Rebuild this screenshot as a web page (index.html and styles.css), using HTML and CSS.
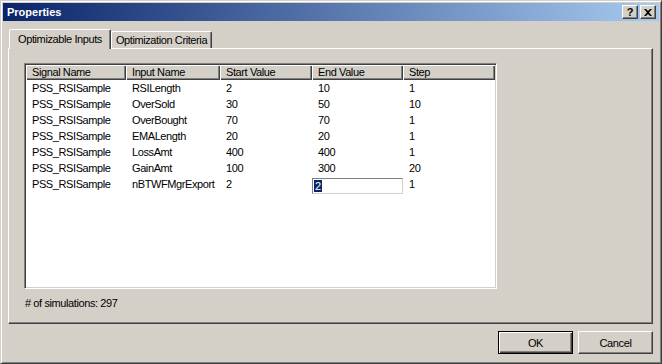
FILE: index.html
```html
<!DOCTYPE html>
<html lang="en">
<head>
    <meta charset="UTF-8">
    <title>Properties</title>
    <link rel="stylesheet" href="styles.css">
</head>
<body>

<div class="window">
    <div class="titlebar">
        <span class="title">Properties</span>
        <div class="caption-buttons">
            <span class="cap-btn">?</span>
            <span class="cap-btn">
                <svg width="8" height="7" viewBox="0 0 8 7"><path d="M0 0h2l2 2 2-2h2L5 3.5 8 7H6L4 5 2 7H0l3-3.5z" fill="#000"/></svg>
            </span>
        </div>
    </div>

    <div class="dialog-body">
        <div class="tabs">
            <div class="tab active">Optimizable Inputs</div>
            <div class="tab">Optimization Criteria</div>
        </div>

        <div class="panel">
            <div class="listview">
                <div class="lv-header">
                    <div class="hcell c1">Signal Name</div>
                    <div class="hcell c2">Input Name</div>
                    <div class="hcell c3">Start Value</div>
                    <div class="hcell c4">End Value</div>
                    <div class="hcell c5">Step</div>
                </div>
                <div class="lv-row">
                    <div class="cell c1">PSS_RSISample</div><div class="cell c2">RSILength</div><div class="cell c3">2</div><div class="cell c4">10</div><div class="cell c5">1</div>
                </div>
                <div class="lv-row">
                    <div class="cell c1">PSS_RSISample</div><div class="cell c2">OverSold</div><div class="cell c3">30</div><div class="cell c4">50</div><div class="cell c5">10</div>
                </div>
                <div class="lv-row">
                    <div class="cell c1">PSS_RSISample</div><div class="cell c2">OverBought</div><div class="cell c3">70</div><div class="cell c4">70</div><div class="cell c5">1</div>
                </div>
                <div class="lv-row">
                    <div class="cell c1">PSS_RSISample</div><div class="cell c2">EMALength</div><div class="cell c3">20</div><div class="cell c4">20</div><div class="cell c5">1</div>
                </div>
                <div class="lv-row">
                    <div class="cell c1">PSS_RSISample</div><div class="cell c2">LossAmt</div><div class="cell c3">400</div><div class="cell c4">400</div><div class="cell c5">1</div>
                </div>
                <div class="lv-row">
                    <div class="cell c1">PSS_RSISample</div><div class="cell c2">GainAmt</div><div class="cell c3">100</div><div class="cell c4">300</div><div class="cell c5">20</div>
                </div>
                <div class="lv-row">
                    <div class="cell c1">PSS_RSISample</div><div class="cell c2">nBTWFMgrExport</div><div class="cell c3">2</div>
                    <div class="cell c4 edit-cell"><span class="edit"><span class="sel">2</span></span></div>
                    <div class="cell c5">1</div>
                </div>
            </div>
            <div class="sim-count"># of simulations: 297</div>
        </div>

        <div class="footer">
            <button class="btn default" type="button">OK</button>
            <button class="btn" type="button">Cancel</button>
        </div>
    </div>
</div>

</body>
</html>
```

FILE: styles.css
```css
body {
    margin: 0;
    padding: 0;
    font-family: "Liberation Sans", Arial, sans-serif;
    font-size: 11px;
    letter-spacing: -0.4px;
    color: #000;
    background-color: #d4d0c8;
}

.window {
    box-sizing: border-box;
    width: 662px;
    height: 364px;
    background-color: #d4d0c8;
    border: 1px solid;
    border-color: #d4d0c8 #404040 #404040 #d4d0c8;
    box-shadow: inset 1px 1px #fff, inset -1px -1px #808080;
    padding: 2px;
    display: flex;
    flex-direction: column;
}

.titlebar {
    height: 18px;
    display: flex;
    align-items: center;
    justify-content: space-between;
    padding: 0 3px 0 4px;
    background: linear-gradient(to right, #0a246a, #a6caf0);
}

.title {
    color: #fff;
    font-weight: bold;
    font-size: 11px;
    letter-spacing: 0;
}

.caption-buttons {
    display: flex;
    gap: 2px;
}

.cap-btn {
    box-sizing: border-box;
    width: 16px;
    height: 14px;
    display: flex;
    align-items: center;
    justify-content: center;
    background-color: #d4d0c8;
    border: 1px solid;
    border-color: #fff #404040 #404040 #fff;
    box-shadow: inset -1px -1px #808080;
    font-weight: bold;
    font-size: 11px;
    letter-spacing: 0;
    line-height: 1;
}

.dialog-body {
    padding: 8px 6px 0 5px;
    display: flex;
    flex-direction: column;
}

.tabs {
    display: flex;
    align-items: flex-end;
    height: 19px;
    padding-left: 1px;
}

.tab {
    box-sizing: border-box;
    height: 17px;
    display: flex;
    align-items: center;
    justify-content: center;
    white-space: nowrap;
    background-color: #d4d0c8;
    border-top: 1px solid #fff;
    border-left: 1px solid #fff;
    border-right: 1px solid #404040;
    box-shadow: inset -1px 0 #808080;
    border-radius: 2px 2px 0 0;
    width: 101px;
}

.tab.active {
    height: 20px;
    width: 102px;
    margin-bottom: -1px;
    position: relative;
    z-index: 1;
    padding-bottom: 2px;
}

.panel {
    box-sizing: border-box;
    height: 276px;
    border: 1px solid;
    border-color: #fff #404040 #404040 #fff;
    box-shadow: inset -1px -1px #808080;
    padding: 14px 15px;
}

.listview {
    box-sizing: border-box;
    width: 473px;
    height: 226px;
    background-color: #fff;
    border: 1px solid;
    border-color: #808080 #fff #fff #808080;
    box-shadow: inset 1px 1px #404040, inset -1px -1px #d4d0c8;
    padding: 1px;
}

.lv-header,
.lv-row {
    display: flex;
}

.hcell {
    box-sizing: border-box;
    height: 15px;
    line-height: 14px;
    padding-left: 6px;
    background-color: #d4d0c8;
    box-shadow: inset 1px 1px #fff, inset -1px -1px #404040, inset -2px -2px #808080;
    white-space: nowrap;
    overflow: hidden;
}

.cell {
    box-sizing: border-box;
    height: 16px;
    line-height: 16px;
    padding-left: 6px;
    white-space: nowrap;
}

.c1 { width: 100px; }
.c2 { width: 94px; }
.c3 { width: 92px; }
.c4 { width: 91px; }
.c5 { width: 92px; }

.edit-cell {
    padding-left: 0;
}

.edit {
    box-sizing: border-box;
    display: block;
    width: 91px;
    height: 16px;
    margin-top: 2px;
    line-height: 14px;
    border: 1px solid;
    border-color: #808080 #d4d0c8 #d4d0c8 #808080;
    background-color: #fff;
    padding-left: 1px;
}

.sel {
    background-color: #0a246a;
    color: #fff;
    padding: 0 1px;
}

.sim-count {
    margin-top: 8px;
    padding-left: 1px;
}

.footer {
    display: flex;
    justify-content: flex-end;
    gap: 5px;
    margin-top: 7px;
}

.btn {
    box-sizing: border-box;
    width: 75px;
    height: 23px;
    padding: 0;
    font-family: "Liberation Sans", Arial, sans-serif;
    font-size: 11px;
    letter-spacing: -0.4px;
    color: #000;
    background-color: #d4d0c8;
    border: 1px solid;
    border-color: #fff #404040 #404040 #fff;
    box-shadow: inset -1px -1px #808080;
}

.btn.default {
    border-color: #000;
    box-shadow: inset 1px 1px #fff, inset -1px -1px #404040, inset -2px -2px #808080;
}
```
